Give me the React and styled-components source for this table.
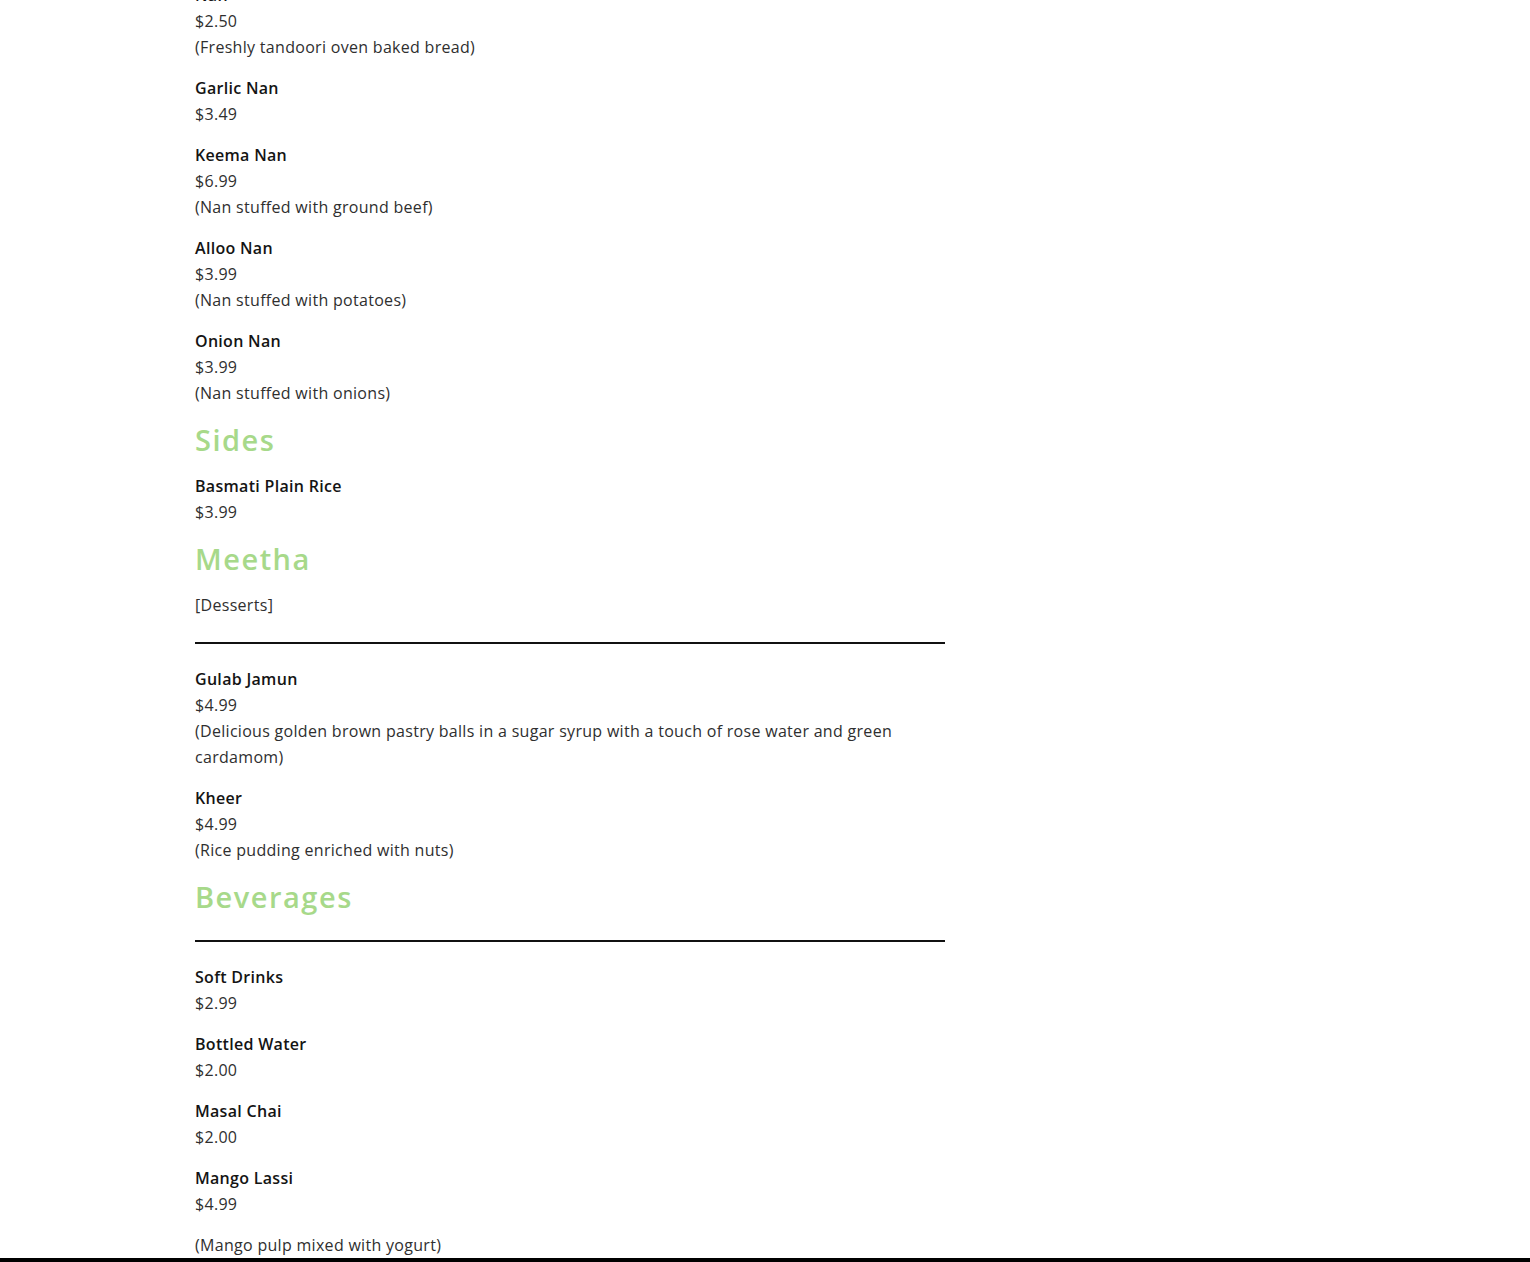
import React from 'react';
import styled, { createGlobalStyle } from 'styled-components';

const GlobalStyle = createGlobalStyle`
  html, body {
    margin: 0;
    padding: 0;
    background: #ffffff;
  }
  body {
    font-family: "Open Sans", "Liberation Sans", sans-serif;
    color: #2b2b2b;
  }
`

const Page = styled.div`
  min-height: 1262px;
  display: flex;
  flex-direction: column;
  overflow: hidden;
`

const Menu = styled.div`
  width: 750px;
  margin: -18px 0 0 195px;
`

const Heading = styled.h2`
  margin: 0 0 14px;
  font-size: 29px;
  line-height: 38px;
  font-weight: 600;
  letter-spacing: 1.5px;
  color: #a7d98a;
`

const Divider = styled.hr`
  margin: 24px 0 22px;
  border: none;
  height: 2px;
  background: #111111;
`

const Item = styled.div`
  margin-bottom: ${({ $last }) => ($last ? '0' : '15px')};
  font-size: 16px;
  line-height: 26px;
  letter-spacing: 0.3px;
`

const Name = styled.div`
  font-weight: 600;
  color: #141414;
`

const Line = styled.div`
  font-weight: 400;
  color: #2f2f2f;
`

const Footer = styled.div`
  margin-top: auto;
  height: 6px;
  background: #000000;
`

const sections = [
  {
    items: [
      { name: 'Nan', price: '$2.50', desc: '(Freshly tandoori oven baked bread)' },
      { name: 'Garlic Nan', price: '$3.49' },
      { name: 'Keema Nan', price: '$6.99', desc: '(Nan stuffed with ground beef)' },
      { name: 'Alloo Nan', price: '$3.99', desc: '(Nan stuffed with potatoes)' },
      { name: 'Onion Nan', price: '$3.99', desc: '(Nan stuffed with onions)' },
    ],
  },
  {
    title: 'Sides',
    items: [{ name: 'Basmati Plain Rice', price: '$3.99' }],
  },
  {
    title: 'Meetha',
    note: '[Desserts]',
    divider: true,
    items: [
      {
        name: 'Gulab Jamun',
        price: '$4.99',
        desc: '(Delicious golden brown pastry balls in a sugar syrup with a touch of rose water and green cardamom)',
      },
      { name: 'Kheer', price: '$4.99', desc: '(Rice pudding enriched with nuts)' },
    ],
  },
  {
    title: 'Beverages',
    divider: true,
    items: [
      { name: 'Soft Drinks', price: '$2.99' },
      { name: 'Bottled Water', price: '$2.00' },
      { name: 'Masal Chai', price: '$2.00' },
      { name: 'Mango Lassi', price: '$4.99' },
    ],
    after: '(Mango pulp mixed with yogurt)',
  },
];

const MenuItem = ({ name, price, desc }) => (
  <Item>
    <Name>{name}</Name>
    <Line>{price}</Line>
    {desc && <Line>{desc}</Line>}
  </Item>
);

const App = () => {
  return (
    <Page>
      <GlobalStyle />
      <Menu>
        {sections.map((section, i) => (
          <div key={i}>
            {section.title && <Heading>{section.title}</Heading>}
            {section.note && (
              <Item>
                <Line>{section.note}</Line>
              </Item>
            )}
            {section.divider && <Divider />}
            {section.items.map((item) => (
              <MenuItem key={item.name} {...item} />
            ))}
            {section.after && (
              <Item $last>
                <Line>{section.after}</Line>
              </Item>
            )}
          </div>
        ))}
      </Menu>
      <Footer />
    </Page>
  );
};

export default App;
